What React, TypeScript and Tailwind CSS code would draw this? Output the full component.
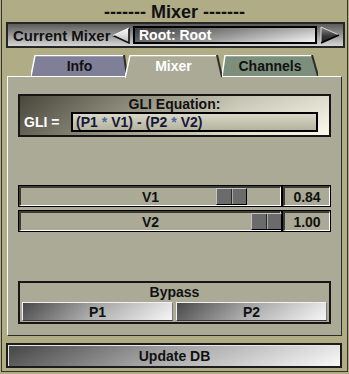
import React from "react";

const sliders = [
  { name: "V1", value: "0.84", thumb: "left-[195px]" },
  { name: "V2", value: "1.00", thumb: "left-[230px]" },
];

const tabs = [
  {
    label: "Info",
    w: 97,
    h: 21,
    pts: "4,0 93,0 96,21 0,21",
    hi: "0,21 4,0.5 93,0.5",
    lo: "93,0 96,21",
    fill: "#7f7f98",
    text: "text-[#111]",
    cls: "ml-[29px] z-0",
  },
  {
    label: "Mixer",
    w: 97,
    h: 23,
    pts: "5,0 92,0 97,23 0,23",
    hi: "0,23 5,0.5 92,0.5",
    lo: "92,0 97,22",
    fill: "#abaa96",
    text: "text-white",
    cls: "-ml-[3px] z-10",
  },
  {
    label: "Channels",
    w: 96,
    h: 21,
    pts: "3,0 90,0 96,21 0,21",
    hi: "0,21 3,0.5 90,0.5",
    lo: "90,0 96,21",
    fill: "#7c8f7c",
    text: "text-[#111]",
    cls: "z-0",
  },
];

function Inset({ className = "", children }: { className?: string; children?: React.ReactNode }) {
  return (
    <div className={`border border-black ${className}`}>
      <div className="relative h-full flex items-center justify-center border-t-2 border-l-2 border-b border-r border-t-[#3d3c34] border-l-[#3d3c34] border-b-white border-r-white">
        {children}
      </div>
    </div>
  );
}

export default function App() {
  return (
    <div className="w-[349px] h-[374px] bg-[#afac86] px-[1px] pb-[2px] font-['Liberation_Sans',Arial,sans-serif] font-bold text-[#111] overflow-hidden">
      <div className="h-full flex flex-col border-x border-b border-[#35352a]">
        {/* Title */}
        <div className="h-[22px] flex items-center justify-center text-[18px] leading-none pt-[1px]">
          ------- Mixer -------
        </div>

        {/* Current mixer selector */}
        <div className="ml-[4px] w-[339px] h-[26px] border-2 border-[#262626] bg-gradient-to-b from-[#5c5c5c] to-[#d6d6d6] flex items-center">
          <span className="w-[104px] pl-[5px] text-[15px] leading-none whitespace-nowrap">Current Mixer</span>
          <svg width="19" height="17" viewBox="0 0 19 17">
            <defs>
              <linearGradient id="la" x1="0" y1="0" x2="0" y2="1">
                <stop offset="0" stopColor="#ffffff" />
                <stop offset="1" stopColor="#b8b8b8" />
              </linearGradient>
            </defs>
            <polygon points="1,8.5 17,1 17,16" fill="url(#la)" />
            <polyline points="1,8.5 17,16 17,1" fill="none" stroke="#111" strokeWidth="1.6" />
            <polyline points="1,8.5 17,1" fill="none" stroke="#f4f4f4" strokeWidth="1" />
          </svg>
          <div className="ml-[2px] w-[184px] h-[18px] border-2 border-black flex items-center pl-[4px] text-white text-[14px] leading-none bg-[linear-gradient(to_bottom,rgba(0,0,0,0.25),rgba(255,255,255,0.15)),linear-gradient(to_right,#4c4c4c,#f2f2f2)]">
            Root: Root
          </div>
          <svg className="ml-[3px]" width="20" height="18" viewBox="0 0 20 18">
            <defs>
              <linearGradient id="ra" x1="0" y1="0" x2="0" y2="1">
                <stop offset="0" stopColor="#8c8c8c" />
                <stop offset="0.55" stopColor="#3a3a3a" />
                <stop offset="1" stopColor="#1a1a1a" />
              </linearGradient>
            </defs>
            <polygon points="1,1 19,9 1,17" fill="url(#ra)" />
            <polyline points="1,17 1,1 19,9" fill="none" stroke="#d8d8d8" strokeWidth="1" />
            <polyline points="19,9 1,17" fill="none" stroke="#000" strokeWidth="1.4" />
          </svg>
        </div>

        {/* Tabs */}
        <div className="mt-[7px] h-[21px] flex items-start">
          {tabs.map((t) => (
            <div key={t.label} className={`relative shrink-0 ${t.cls}`} style={{ width: t.w, height: t.h }}>
              <svg className="absolute inset-0" width={t.w} height={t.h} viewBox={`0 0 ${t.w} ${t.h}`}>
                <polygon points={t.pts} fill={t.fill} />
                <polyline points={t.hi} fill="none" stroke="#ffffff" strokeWidth="1.5" />
                <polyline points={t.lo} fill="none" stroke="#2e2e28" strokeWidth="2" />
              </svg>
              <div className={`relative h-[21px] flex items-center justify-center text-[14px] leading-none ${t.text}`}>
                {t.label}
              </div>
            </div>
          ))}
        </div>

        {/* Panel */}
        <div className="ml-[5px] w-[335px] h-[260px] bg-[#abaa96] border border-t-white border-l-white border-r-[#2e2e28] border-b-[#2e2e28] flex flex-col px-[10px]">
          {/* GLI equation */}
          <div className="mt-[17px] h-[43px] border-2 border-[#161616] flex flex-col bg-[linear-gradient(to_bottom,rgba(0,0,0,0.12),rgba(255,255,255,0.1)),linear-gradient(to_right,#535143,#8f8d7b_30%,#dedcc9_70%,#fbfae9)]">
            <div className="h-[15px] flex items-end justify-center text-[14px] leading-none">GLI Equation:</div>
            <div className="mt-[1px] flex items-center pl-[4px]">
              <span className="w-[47px] text-white text-[14px] leading-none">GLI =</span>
              <div className="w-[247px] h-[20px] border-2 border-black flex items-center pl-[3px] text-[14px] leading-none text-[#17173a] bg-[linear-gradient(to_bottom,#d9d8c6,#b4b39f)]">
                (P1 <span className="text-[#4a6aa8] px-[4px]">*</span> V1) - (P2 <span className="text-[#4a6aa8] px-[4px]">*</span> V2)
              </div>
            </div>
          </div>

          {/* Sliders */}
          <div className="mt-[48px] flex flex-col gap-[3px]">
            {sliders.map((s) => (
              <div key={s.name} className="flex h-[22px]">
                <Inset className="w-[264px]">
                  <span className="text-[14px] leading-none">{s.name}</span>
                  <div className={`absolute top-0 ${s.thumb} w-[31px] h-[17px] flex bg-[#6b6b6b] border border-t-[#c4c4c4] border-l-[#c4c4c4] border-b-black border-r-black`}>
                    <div className="flex-1 border-r border-[#2a2a2a]" />
                    <div className="flex-1 border-l border-[#a8a8a8]" />
                  </div>
                </Inset>
                <Inset className="w-[49px]">
                  <span className="text-[14px] leading-none">{s.value}</span>
                </Inset>
              </div>
            ))}
          </div>

          {/* Bypass */}
          <div className="mt-[49px] h-[43px] border-2 border-[#161616] flex flex-col px-[2px]">
            <div className="h-[18px] flex items-center justify-center text-[14px] leading-none">Bypass</div>
            <div className="mt-[1px] flex gap-[3px]">
              {["P1", "P2"].map((p) => (
                <div
                  key={p}
                  className="w-[151px] h-[19px] flex items-center justify-center text-[14px] leading-none border border-t-[#f2f2f2] border-l-[#f2f2f2] border-b-[#3a3a3a] border-r-[#7a7a7a] bg-[linear-gradient(to_bottom,rgba(0,0,0,0.08),rgba(255,255,255,0.1)),linear-gradient(to_right,#4f4f4f,#a9a9a9_45%,#f6f6f6)]"
                >
                  {p}
                </div>
              ))}
            </div>
          </div>
        </div>

        {/* Update DB */}
        <div className="mt-[7px] ml-[4px] w-[336px] h-[25px] border-2 border-[#1c1c1c]">
          <div className="h-full flex items-center justify-center text-[14px] leading-none border-t border-l border-[#e8e8e8] bg-[linear-gradient(to_bottom,rgba(0,0,0,0.08),rgba(255,255,255,0.1)),linear-gradient(to_right,#4b4b4b,#a6a6a6_45%,#f8f8f8)]">
            Update DB
          </div>
        </div>
      </div>
    </div>
  );
}
